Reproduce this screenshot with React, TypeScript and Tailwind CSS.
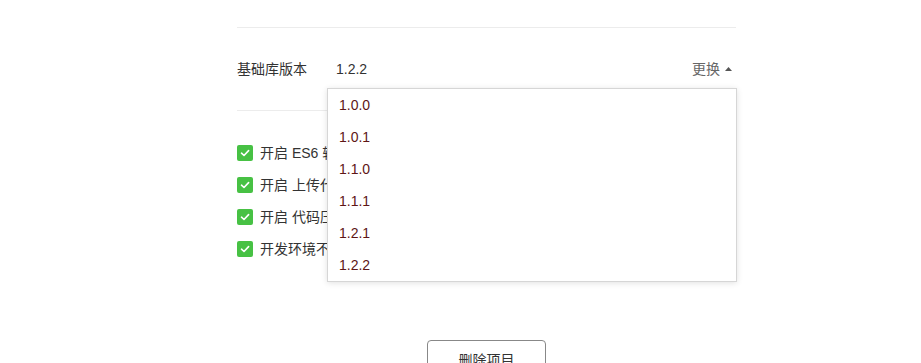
const versions = ["1.0.0", "1.0.1", "1.1.0", "1.1.1", "1.2.1", "1.2.2"];

const options = [
  "开启 ES6 转 ES5",
  "开启 上传代码时样式自动补全",
  "开启 代码压缩上传",
  "开发环境不校验请求域名、TLS 版本以及 HTTPS 证书",
];

const Check = () => (
  <span className="flex h-4 w-4 items-center justify-center rounded-[2px] bg-[#47c144]">
    <svg width="12" height="12" viewBox="0 0 12 12" fill="none">
      <path d="M2.5 6.2 L5 8.5 L9.6 3.6" stroke="white" strokeWidth="1.6" strokeLinecap="round" strokeLinejoin="round" />
    </svg>
  </span>
);

const App = () => {
  return (
    <div
      className="h-[363px] w-[921px] overflow-hidden bg-white text-[14px] text-[#333]"
      style={{ fontFamily: '"Liberation Sans", Arial, "Noto Sans CJK SC", sans-serif' }}
    >
      <div className="ml-[237px] w-[499px] pt-[27px]">
        <div className="relative border-t border-[#ececec]">
          <div className="flex items-center py-[31px] leading-[20px]">
            <span className="w-[99px]">基础库版本</span>
            <span className="flex-1">1.2.2</span>
            <span className="flex items-center gap-[5px] pr-[4px] text-[#666]">
              更换
              <svg width="7" height="4" viewBox="0 0 7 4">
                <path d="M0 4 L3.5 0 L7 4 Z" fill="#555" />
              </svg>
            </span>
          </div>
          <div className="absolute left-[90px] top-[60px] z-10 w-[410px] border border-[#d6d6d6] bg-white shadow-[0_1px_6px_rgba(0,0,0,0.12)]">
            {versions.map((v) => (
              <div key={v} className="flex h-[32px] items-center px-[11px] text-[#5e1616]">
                {v}
              </div>
            ))}
          </div>
          <div className="border-t border-[#ececec]" />
        </div>
        <div className="flex flex-col gap-[12px] pt-[32px]">
          {options.map((o) => (
            <div key={o} className="flex h-[20px] items-center gap-[7px] leading-[20px]">
              <Check />
              <span className="whitespace-nowrap">{o}</span>
            </div>
          ))}
        </div>
        <div className="flex justify-center pt-[81px]">
          <button className="h-[40px] w-[119px] rounded-[4px] border border-[#888] bg-white text-[14px] text-[#333]">
            删除项目
          </button>
        </div>
      </div>
    </div>
  );
};

export default App;
